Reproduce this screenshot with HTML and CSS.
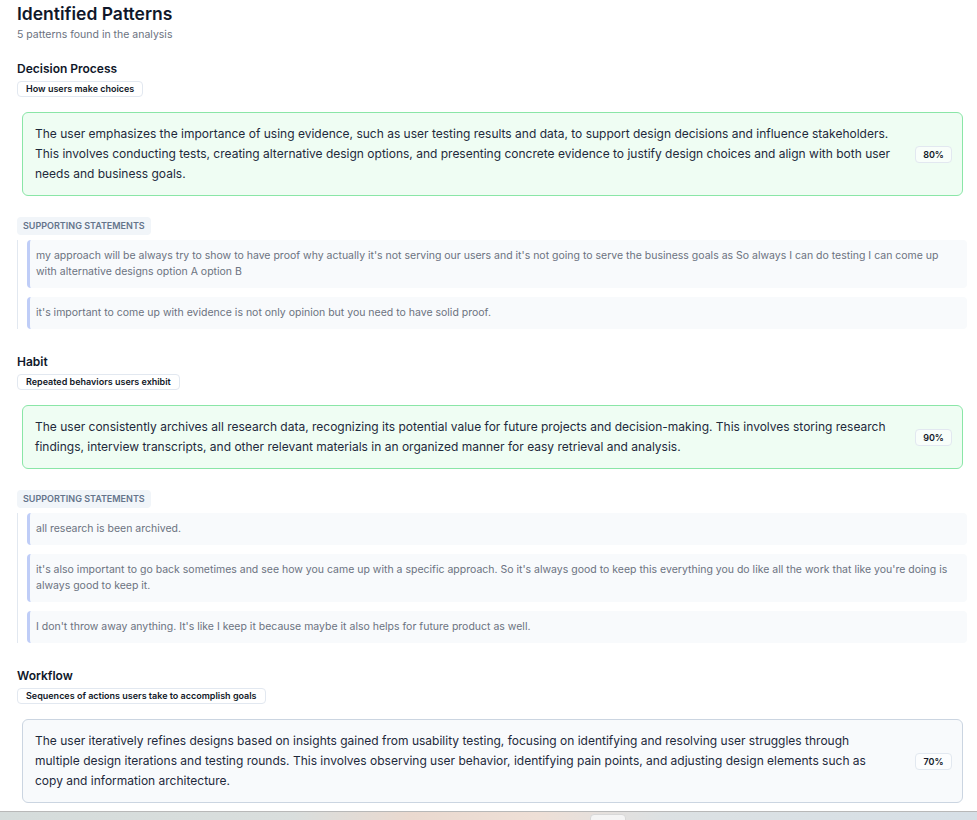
FILE: index.html
```html
<!DOCTYPE html>
<html lang="en">
<head>
<meta charset="utf-8">
<title>Identified Patterns</title>
<link rel="stylesheet" href="styles.css">
</head>
<body>
<main class="page">
  <header class="page-head">
    <h1 class="title">Identified Patterns</h1>
    <p class="subtitle">5 patterns found in the analysis</p>
  </header>

  <section class="pattern">
    <h2 class="pattern-name">Decision Process</h2>
    <span class="tag">How users make choices</span>
    <div class="insight insight-green">
      <p class="insight-text">The user emphasizes the importance of using evidence, such as user testing results and data, to support design decisions and influence stakeholders. This involves conducting tests, creating alternative design options, and presenting concrete evidence to justify design choices and align with both user needs and business goals.</p>
      <span class="score">80%</span>
    </div>
    <div class="support-label">Supporting Statements</div>
    <ul class="statements">
      <li class="statement">my approach will be always try to show to have proof why actually it's not serving our users and it's not going to serve the business goals as So always I can do testing I can come up with alternative designs option A option B</li>
      <li class="statement">it's important to come up with evidence is not only opinion but you need to have solid proof.</li>
    </ul>
  </section>

  <section class="pattern">
    <h2 class="pattern-name">Habit</h2>
    <span class="tag">Repeated behaviors users exhibit</span>
    <div class="insight insight-green">
      <p class="insight-text">The user consistently archives all research data, recognizing its potential value for future projects and decision-making. This involves storing research findings, interview transcripts, and other relevant materials in an organized manner for easy retrieval and analysis.</p>
      <span class="score">90%</span>
    </div>
    <div class="support-label">Supporting Statements</div>
    <ul class="statements">
      <li class="statement">all research is been archived.</li>
      <li class="statement">it's also important to go back sometimes and see how you came up with a specific approach. So it's always good to keep this everything you do like all the work that like you're doing is always good to keep it.</li>
      <li class="statement">I don't throw away anything. It's like I keep it because maybe it also helps for future product as well.</li>
    </ul>
  </section>

  <section class="pattern">
    <h2 class="pattern-name">Workflow</h2>
    <span class="tag">Sequences of actions users take to accomplish goals</span>
    <div class="insight insight-gray">
      <p class="insight-text">The user iteratively refines designs based on insights gained from usability testing, focusing on identifying and resolving user struggles through multiple design iterations and testing rounds. This involves observing user behavior, identifying pain points, and adjusting design elements such as copy and information architecture.</p>
      <span class="score">70%</span>
    </div>
  </section>
</main>
<div class="taskbar"><span class="taskbar-pill"></span></div>
</body>
</html>
```

FILE: styles.css
```css
* { box-sizing: border-box; }

html, body {
  margin: 0;
  padding: 0;
  background: #ffffff;
}

body {
  font-family: Inter, "Noto Sans", "Liberation Sans", sans-serif;
  color: #111827;
  overflow: hidden;
}

.page {
  padding: 0 10px 40px 17px;
}

.page-head {
  display: flex;
  flex-direction: column;
}

.title {
  margin: 0;
  font-size: 17.5px;
  line-height: 28px;
  font-weight: 600;
  color: #0f172a;
}

.subtitle {
  margin: 1px 0 0 0;
  font-size: 10.5px;
  line-height: 12px;
  color: #6b7280;
}

.pattern {
  display: flex;
  flex-direction: column;
  align-items: flex-start;
  margin-top: 20px;
}

.pattern + .pattern {
  margin-top: 25px;
}

.pattern-name {
  margin: 0;
  font-size: 12px;
  line-height: 16px;
  font-weight: 600;
  color: #0f172a;
}

.tag {
  margin-top: 4px;
  display: inline-block;
  font-size: 9px;
  line-height: 14px;
  font-weight: 600;
  color: #111827;
  padding: 0 8px;
  border: 1px solid #e2e8f0;
  border-radius: 4px;
  background: #ffffff;
}

.insight {
  align-self: stretch;
  margin: 15px 4px 0 5px;
  display: flex;
  align-items: center;
  gap: 24px;
  padding: 11px 10px 11px 12px;
  border-radius: 6px;
  border: 1px solid;
}

.insight-green {
  background: #effdf3;
  border-color: #8ae6a7;
}

.insight-gray {
  background: #f8fafc;
  border-color: #cbd5e1;
}

.insight-text {
  flex: 1;
  margin: 0;
  font-size: 12px;
  line-height: 20px;
  color: #1e293b;
}

.score {
  flex: none;
  width: 37px;
  text-align: center;
  font-size: 9px;
  line-height: 15px;
  font-weight: 600;
  color: #111827;
  border: 1px solid #e2e8f0;
  border-radius: 4px;
  background: rgba(255, 255, 255, 0.55);
}

.support-label {
  margin-top: 21px;
  font-size: 9px;
  line-height: 18px;
  font-weight: 600;
  text-transform: uppercase;
  color: #64748b;
  background: #f1f5f9;
  border-radius: 4px;
  padding: 0 6px;
}

.statements {
  align-self: stretch;
  list-style: none;
  margin: 5px 0 0 0;
  padding: 0 0 0 9px;
  border-left: 1px solid #e2e8f0;
  display: flex;
  flex-direction: column;
  gap: 9px;
}

.statement {
  background: #f8fafc;
  border-left: 3px solid #bfcdf7;
  border-radius: 4px;
  padding: 8px 12px 8px 6px;
  font-size: 10.5px;
  line-height: 16px;
  color: #6b7280;
}

.taskbar {
  position: fixed;
  left: 0;
  right: 0;
  bottom: 0;
  height: 9px;
  border-top: 1px solid #b8b8b8;
  background: linear-gradient(90deg, #d5dcdb 0%, #d9dedd 30%, #ead9cf 42%, #eedfd6 55%, #dce1e3 68%, #d6dfe6 100%);
}

.taskbar-pill {
  position: absolute;
  left: 590px;
  top: 2px;
  width: 36px;
  height: 8px;
  border-radius: 4px 4px 0 0;
  background: #f4f4f4;
  border: 1px solid #d8d8d8;
}
```
